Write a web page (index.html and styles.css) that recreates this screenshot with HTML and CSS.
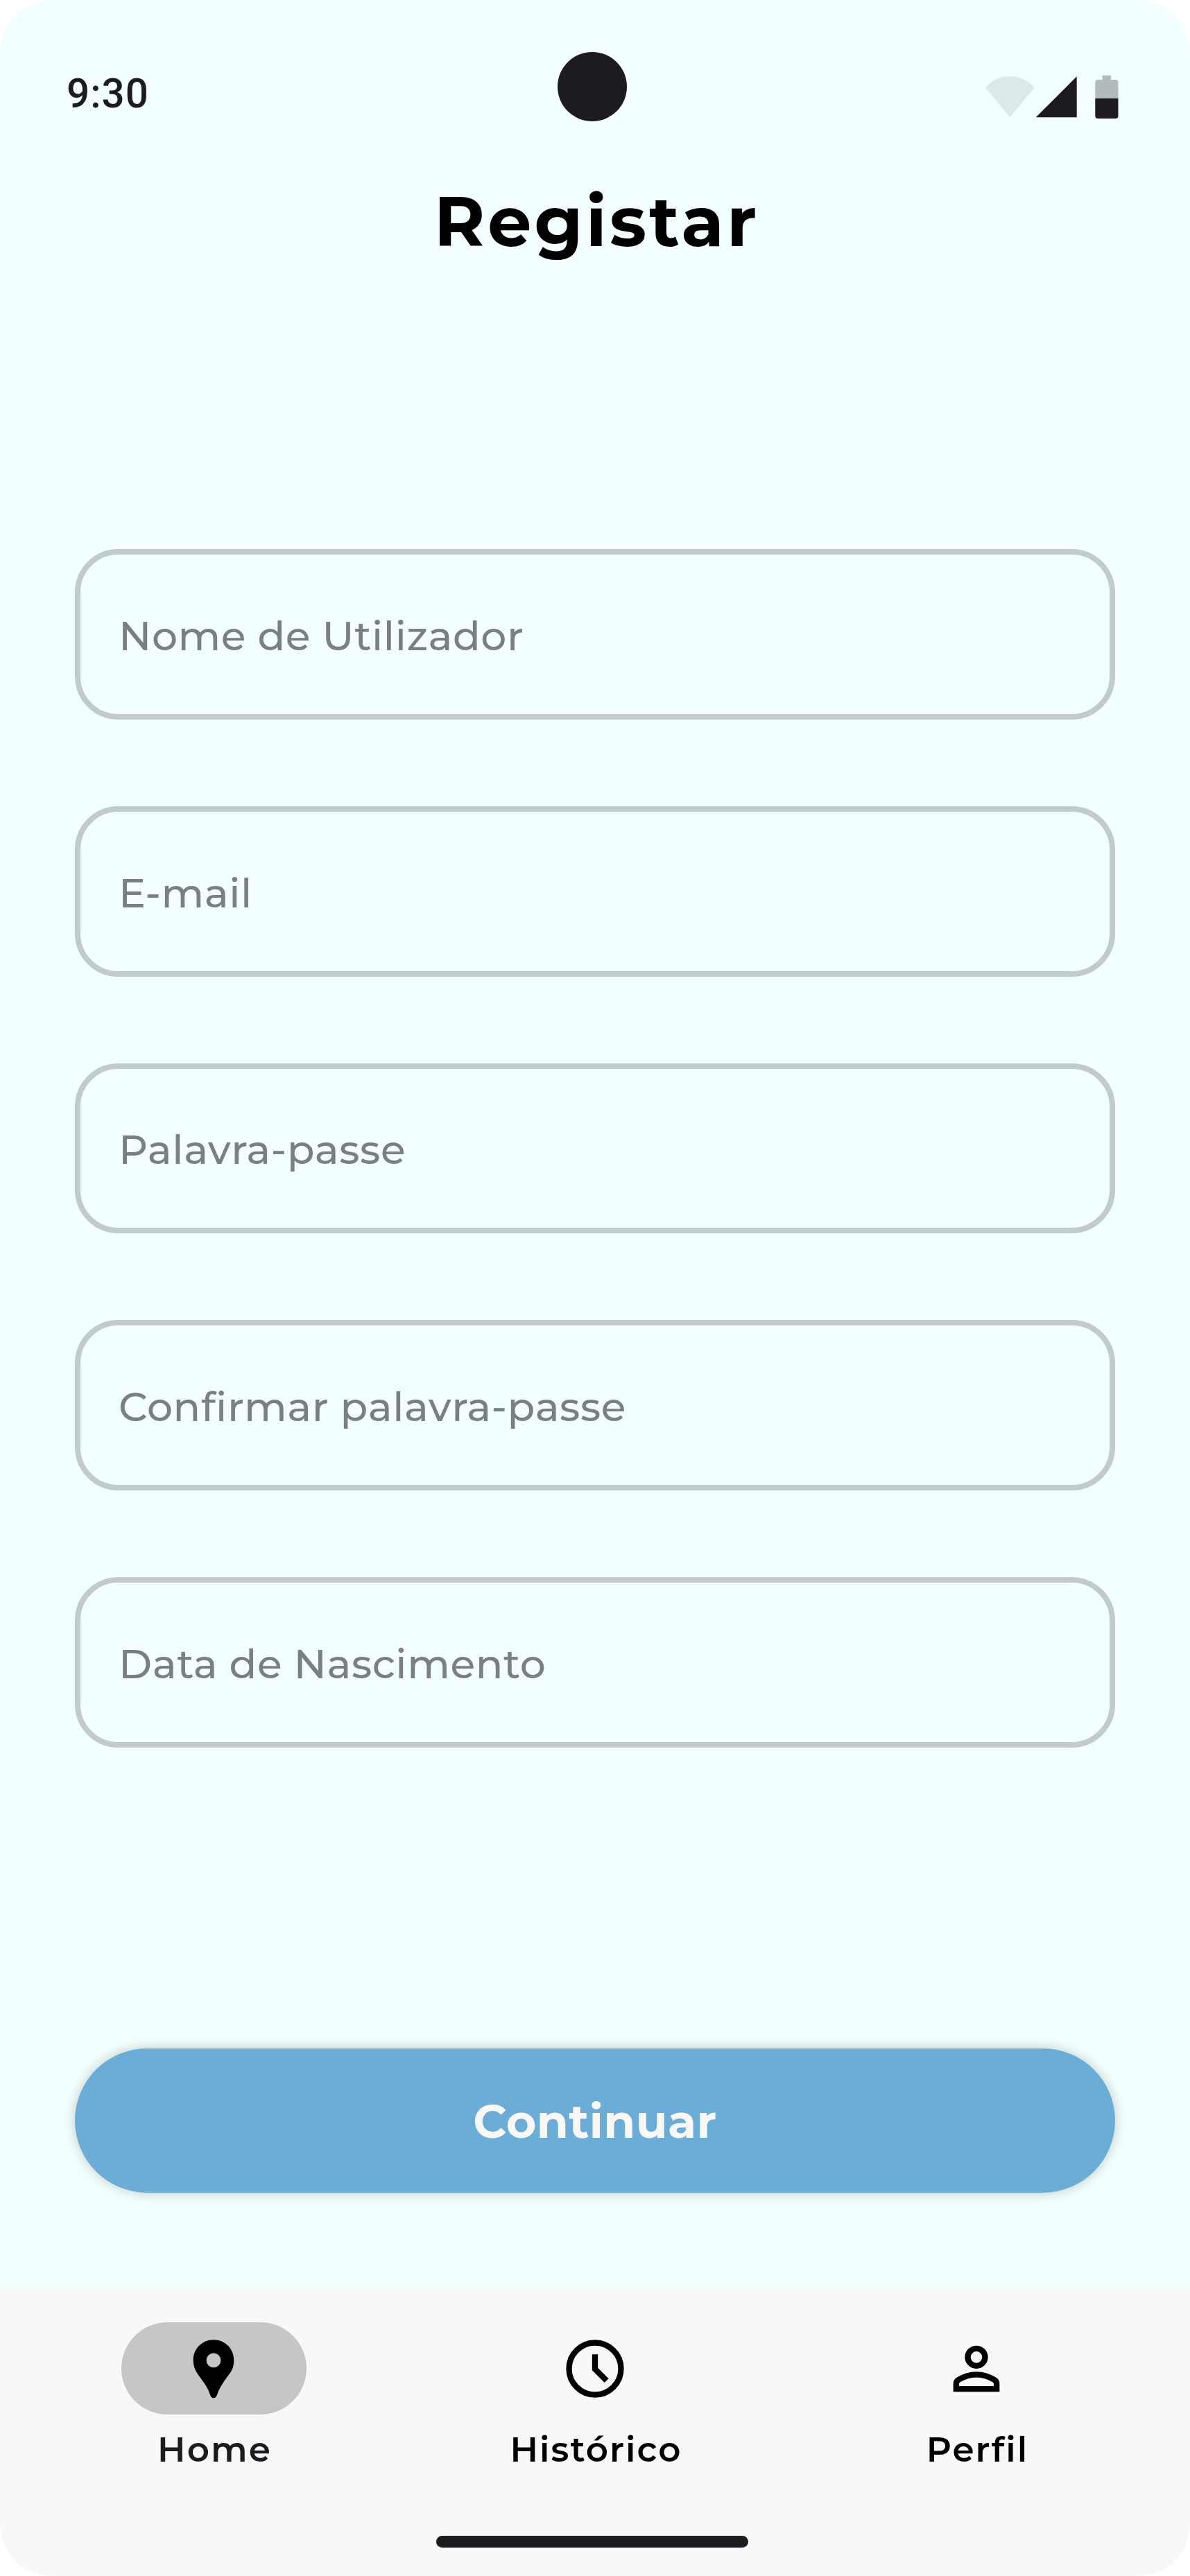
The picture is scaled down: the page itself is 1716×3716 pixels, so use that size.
FILE: index.html
```html
<!DOCTYPE html>
<html lang="pt">
<head>
<meta charset="utf-8">
<title>Registar</title>
<link rel="stylesheet" href="styles.css">
</head>
<body>
<div class="screen">
  <header class="status">
    <span class="time">9:30</span>
    <span class="camera"></span>
    <svg class="indicators" viewBox="0 0 192 64" aria-hidden="true">
      <path d="M0 18.5A46 46 0 0 1 70.5 18.5L35.3 61.3Z" fill="#1d1b20" fill-opacity=".1"/>
      <path d="M72.700 61.300H131.700V2.300Z" fill="#1d1b20"/>
      <path d="M158.300 34V11a4 4 0 0 1 4-4H168.600V.700H181V7h6.500a4 4 0 0 1 4 4V34Z" fill="#1d1b20" fill-opacity=".3"/>
      <path d="M158.300 34H191.500V59a4 4 0 0 1-4 4H162.300a4 4 0 0 1-4-4Z" fill="#1d1b20"/>
    </svg>
  </header>
  <main class="content">
    <h1 class="title">Registar</h1>
    <form class="form">
      <div class="field"><span class="hint">Nome de Utilizador</span></div>
      <div class="field"><span class="hint">E-mail</span></div>
      <div class="field"><span class="hint">Palavra-passe</span></div>
      <div class="field"><span class="hint">Confirmar palavra-passe</span></div>
      <div class="field"><span class="hint">Data de Nascimento</span></div>
      <button class="submit" type="button">Continuar</button>
    </form>
  </main>
  <nav class="nav">
    <div class="tabs">
      <a class="tab tab-home">
        <span class="pill pill-active"><svg class="icon" viewBox="0 0 100 100"><path fill-rule="evenodd" d="M50 8.300C33.500 8.300 20.700 21.300 20.700 37.500C20.700 45.500 23 51.500 27 57.500C34.500 68.500 41 75 44.600 86.500C45.700 90 47.300 92.300 50 92.300C52.700 92.300 54.300 90 55.400 86.500C59.500 75 66 67 73.500 56.500C77.500 51 79.300 45.500 79.300 37.500C79.300 21.300 66.500 8.300 50 8.300ZM50 27.500a10.400 10.400 0 1 1 0 20.800a10.400 10.400 0 0 1 0-20.800Z"/></svg></span>
        <span class="label">Home</span>
      </a>
      <a class="tab">
        <span class="pill"><svg class="icon" viewBox="0 0 24 24" fill="none" stroke="#000" stroke-width="2"><circle cx="12" cy="12" r="9"/><path d="M12 7v5.100l4 4"/></svg></span>
        <span class="label">Histórico</span>
      </a>
      <a class="tab">
        <span class="pill"><svg class="icon" viewBox="0 0 24 24" fill="none" stroke="#000" stroke-width="2"><circle cx="12" cy="8" r="3"/><path d="M5 19V17.200C5 16.500 5.300 16.100 5.900 15.800Q8.800 14 12 14T18.100 15.800C18.700 16.100 19 16.500 19 17.200V19Z"/></svg></span>
        <span class="label">Perfil</span>
      </a>
    </div>
    <span class="handle"></span>
  </nav>
</div>
</body>
</html>
```

FILE: styles.css
```css
* {
  box-sizing: border-box;
}

body {
  margin: 0;
  background: #fff;
  font-family: Montserrat, Inter, "Liberation Sans", sans-serif;
}

.screen {
  display: flex;
  flex-direction: column;
  width: 1716px;
  height: 3716px;
  border-radius: 75px;
  overflow: hidden;
  background: #f3ffff;
}

.status {
  display: grid;
  grid-template-columns: 708px 100px 1fr;
  height: 217px;
  padding: 75px 103px 0 96px;
}

.time {
  padding-top: 26px;
  font: 500 58.33px/68px Roboto, sans-serif;
  letter-spacing: 1px;
  color: #1d1b20;
}

.camera {
  width: 100px;
  height: 100px;
  border-radius: 50%;
  background: #1d1b20;
}

.indicators {
  justify-self: end;
  width: 192px;
  height: 64px;
  margin-top: 33px;
}

.content {
  flex: 1;
}

.title {
  margin: 0;
  height: 575px;
  padding: 42px 0 0 5px;
  font-size: 100px;
  font-weight: 700;
  line-height: 120px;
  letter-spacing: 4.17px;
  text-align: center;
}

.form {
  display: flex;
  flex-direction: column;
  gap: 125px;
  padding: 0 108px;
}

.field {
  display: flex;
  align-items: center;
  height: 245.8px;
  padding: 6px 0 0 55px;
  border: 8.33px solid #c1cbcc;
  border-radius: 62.5px;
}

.hint {
  font-size: 58.33px;
  font-weight: 500;
  line-height: 70px;
  letter-spacing: 0.6px;
  color: #7a8080;
  white-space: nowrap;
}

.submit {
  height: 208px;
  margin-top: 309px;
  padding: 2px 0 0;
  border: 0;
  border-radius: 104px;
  background: #6badd7;
  box-shadow: 0 0 16.67px rgba(0, 0, 0, 0.22);
  color: #f8f8f8;
  font: 700 66.67px/80px Montserrat, Inter, sans-serif;
  letter-spacing: 0.417px;
}

.nav {
  display: flex;
  flex-direction: column;
  align-items: center;
  height: 416px;
  padding-top: 50px;
  background: #f8f8f8;
}

.tabs {
  display: grid;
  grid-template-columns: repeat(3, 1fr);
  gap: 33px;
  width: 1617px;
  height: 308px;
}

.tab {
  display: flex;
  flex-direction: column;
  align-items: center;
}

.pill {
  display: flex;
  align-items: center;
  justify-content: center;
  width: 267px;
  height: 133.3px;
  border-radius: 67px;
}

.pill-active {
  background: #c6c6c6;
}

.icon {
  width: 100px;
  height: 100px;
}

.label {
  margin-top: 17.5px;
  padding-left: 3px;
  font-size: 50px;
  font-weight: 600;
  line-height: 66px;
  letter-spacing: 2.08px;
  color: #000;
}

.tab-home .label {
  color: #1d1b20;
}

.handle {
  width: 450px;
  height: 17px;
  margin-right: 8px;
  border-radius: 9px;
  background: #1d1b20;
}
```
